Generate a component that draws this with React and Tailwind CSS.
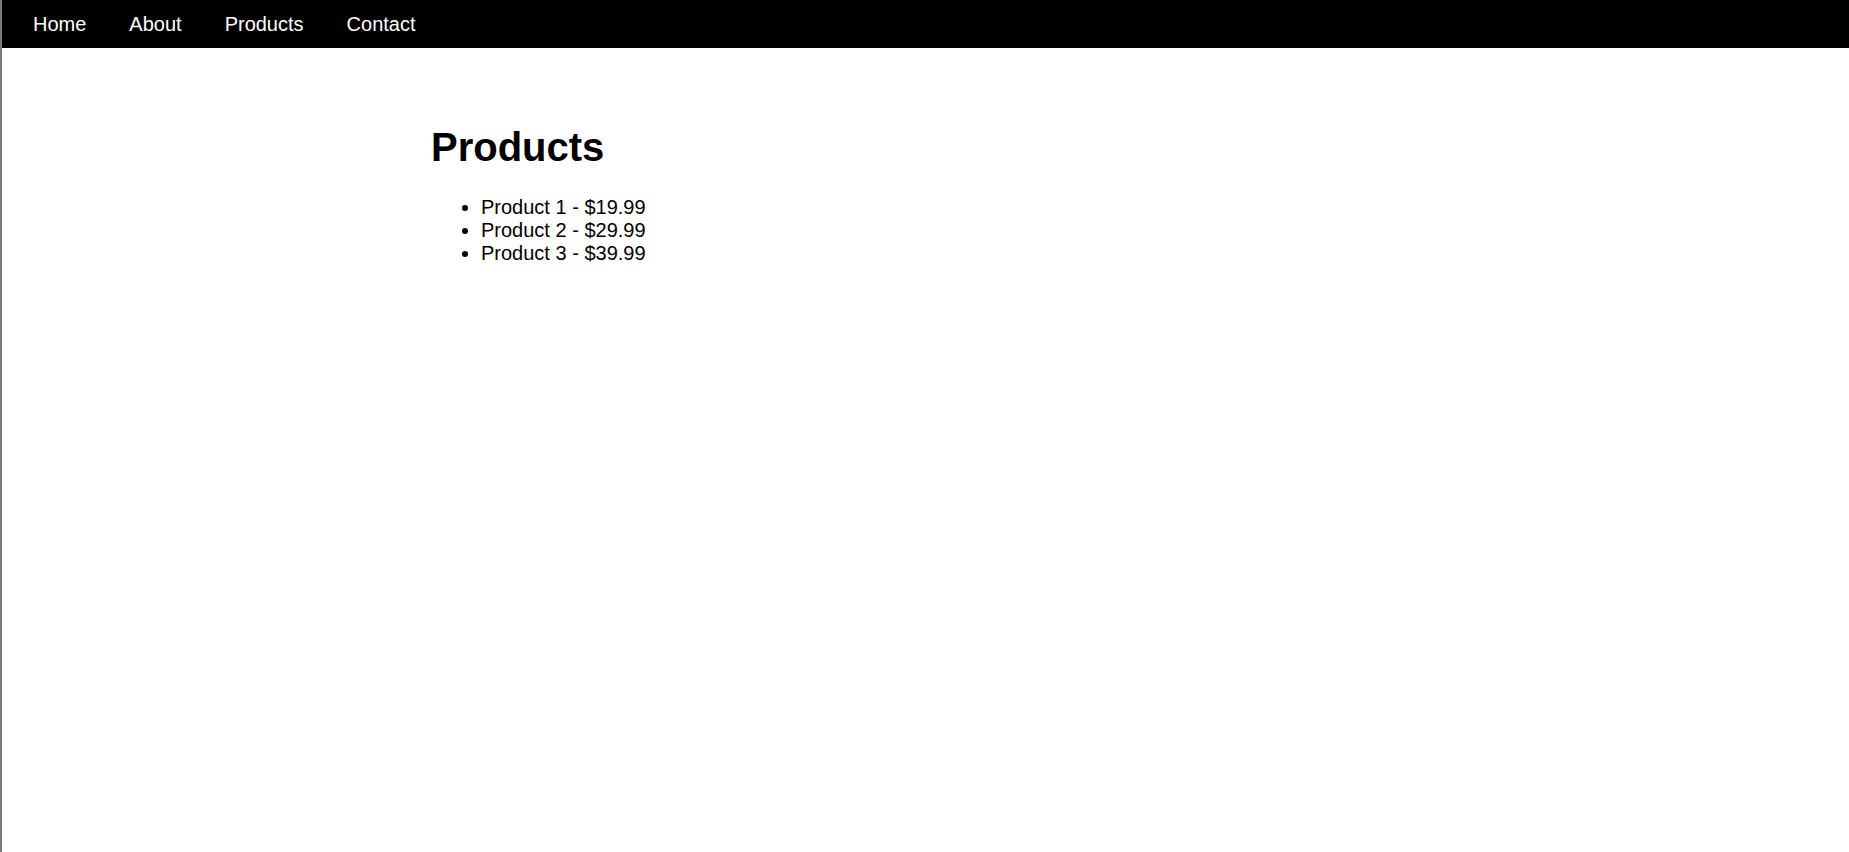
import React from 'react';

const links = ['Home', 'About', 'Products', 'Contact'];
const products = [
  { name: 'Product 1', price: '$19.99' },
  { name: 'Product 2', price: '$29.99' },
  { name: 'Product 3', price: '$39.99' },
];

const App = () => {
  return (
    <div className="min-h-screen bg-white border-l-2 border-[#7b7b7b] font-['Liberation_Sans',Arial,sans-serif] text-black">
      <nav className="h-12 bg-black flex items-center pl-[31px] gap-[43px]">
        {links.map((link) => (
          <a key={link} href="#" className="text-white text-[20px] leading-[23px]">
            {link}
          </a>
        ))}
      </nav>
      <main className="pl-[429px] pt-[76px]">
        <h1 className="text-[40px] leading-[46px] font-bold">Products</h1>
        <ul className="mt-[26px] list-disc list-outside pl-[50px] text-[20px] leading-[23px]">
          {products.map((p) => (
            <li key={p.name}>
              {p.name} - {p.price}
            </li>
          ))}
        </ul>
      </main>
    </div>
  );
};

export default App;
